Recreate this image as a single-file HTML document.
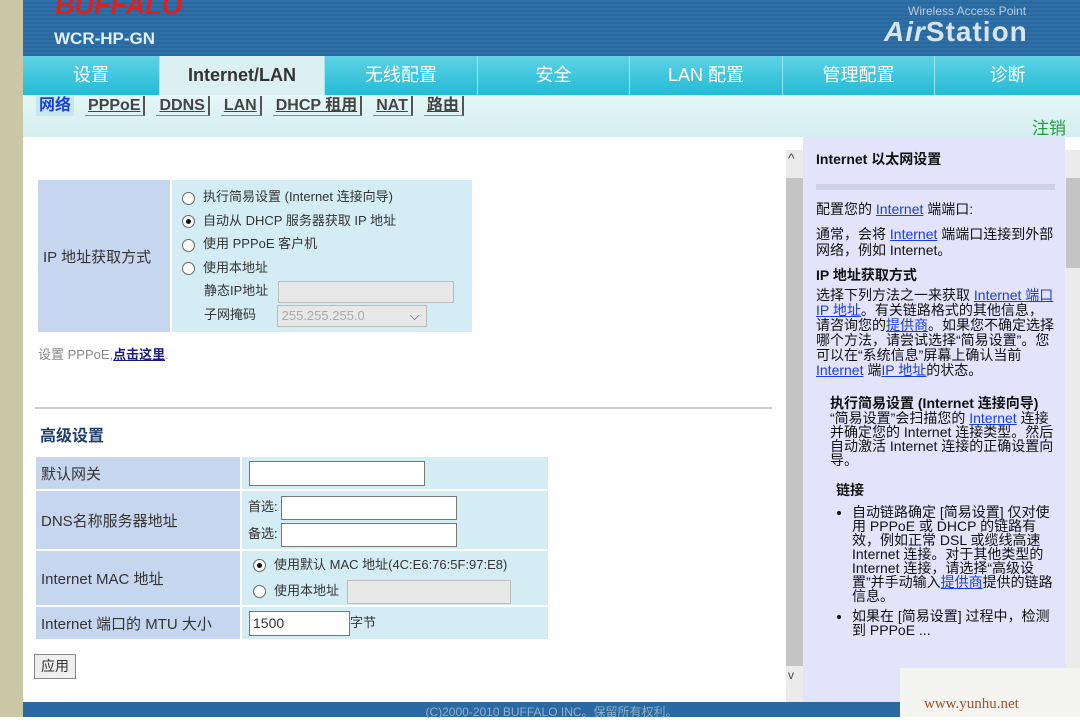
<!DOCTYPE html>
<html><head><meta charset="utf-8"><style>
*{box-sizing:border-box;margin:0;padding:0}
body{width:1080px;height:717px;overflow:hidden;background:#fff;font-family:"Liberation Sans","Noto Sans CJK SC",sans-serif;font-size:14px;color:#333;position:relative}
.abs{position:absolute}
.strip{left:0;top:0;width:23px;height:717px;background:#cbc6a6}
.hdr{left:23px;top:0;width:1057px;height:56px;background:repeating-linear-gradient(#2e6fa6 0 2px,#2a68a0 2px 4px)}
.nav{left:23px;top:56px;width:1057px;height:39px;background:linear-gradient(#5fd2e4,#22bcd6);display:flex}
.nav div{color:#fff;font-size:18px;text-align:center;line-height:39px;border-right:1px solid #9fe4ef}
.nav .act{background:#dcf0f2;color:#333;font-weight:bold}
.sub{left:23px;top:95px;width:1057px;height:42px;background:linear-gradient(#e6f6f7,#d3eef1)}
.tabs{left:36px;top:96px;display:flex;gap:11px;font-weight:bold;font-size:16px}
.tabs span{border-right:2px solid #555;border-bottom:1px solid #888;padding:0 3px;color:#444;text-decoration:underline;line-height:19px}
.tabs span.f{color:#1a3fd8;text-decoration:none;border:none;background:#c8e8f0}
table{border-collapse:separate;border-spacing:2px}
.lbl{background:#c7d6ef;color:#333;font-size:15px;padding-left:5px}
.val{background:#d4edf4;font-size:13px}
.rad{display:inline-block;width:13px;height:13px;border:1px solid #666;border-radius:50%;background:#fff;vertical-align:middle;margin-right:8px;position:relative}
.rad.on::after{content:"";position:absolute;left:3px;top:3px;width:5px;height:5px;border-radius:50%;background:#111}
.inp{display:inline-block;border:1px solid #777;background:#fff;vertical-align:middle}
.dis{background:#e8e8e8;border-color:#bbb}
.help{left:803px;top:137px;width:262px;height:565px;background:#e3e3fb;padding:15px 10px 0 13px;font-size:14px;line-height:15.5px;color:#111;overflow:hidden}
.help a{color:#1a3fd8;text-decoration:underline}
.help p{margin-bottom:10px}
.sb{background:#ebebeb}
.thumb{background:#c4c4c4}
.foot{left:23px;top:702px;width:1057px;height:15px;background:#2a6aa0;color:#8fb1cf;font-size:12px;text-align:center;line-height:20px}
</style></head><body>
<div class="abs strip"></div>
<div class="abs hdr"></div>
<div class="abs" style="left:55px;top:-10px;color:#e02020;font:italic 900 27px 'Liberation Sans',sans-serif;letter-spacing:0px">BUFFALO</div>
<div class="abs" style="left:54px;top:29px;color:#e4eef6;font:bold 17px 'Liberation Sans',sans-serif">WCR-HP-GN</div>
<div class="abs" style="left:908px;top:4px;color:#b9cde0;font-size:12px">Wireless Access Point</div>
<div class="abs" style="left:884px;top:16px;color:#d8e4ee;font:bold 28px 'Liberation Sans',sans-serif;letter-spacing:1px"><i>Air</i>Station</div>
<div class="abs nav">
<div style="width:137px">设置</div><div class="act" style="width:165px">Internet/LAN</div><div style="width:153px">无线配置</div><div style="width:152px">安全</div><div style="width:153px">LAN 配置</div><div style="width:152px">管理配置</div><div style="width:145px;border:none">诊断</div>
</div>
<div class="abs sub"></div>
<div class="abs tabs"><span class="f">网络</span><span>PPPoE</span><span>DDNS</span><span>LAN</span><span>DHCP 租用</span><span>NAT</span><span>路由</span></div>
<div class="abs" style="left:1032px;top:114px;color:#2a9a40;font-size:17px">注销</div>

<table class="abs" style="left:36px;top:178px;width:438px">
<tr><td class="lbl" style="width:132px;height:152px">IP 地址获取方式</td>
<td class="val" style="padding-left:10px;line-height:23.5px">
<div><span class="rad"></span>执行简易设置 (Internet 连接向导)</div>
<div><span class="rad on"></span>自动从 DHCP 服务器获取 IP 地址</div>
<div><span class="rad"></span>使用 PPPoE 客户机</div>
<div><span class="rad"></span>使用本地址</div>
<div style="padding-left:22px">静态IP地址 <span class="inp dis" style="width:176px;height:22px;margin-left:6px"></span></div>
<div style="padding-left:22px">子网掩码 <span class="inp dis" style="width:150px;height:22px;margin-left:17px;color:#aaa;font-size:13px;line-height:20px;padding-left:4px">255.255.255.0 <span style="float:right;color:#555;padding-right:6px">⌵</span></span></div>
</td></tr></table>
<div class="abs" style="left:38px;top:344px;color:#888;font-size:13px">设置 PPPoE,<a style="color:#1a1a80;font-weight:bold;text-decoration:underline">点击这里</a>.</div>
<div class="abs" style="left:35px;top:407px;width:737px;height:2px;background:#ccc"></div>
<div class="abs" style="left:40px;top:422px;color:#1e3f6e;font-size:16px;font-weight:bold">高级设置</div>

<table class="abs" style="left:34px;top:455px;width:516px">
<tr><td class="lbl" style="width:204px;height:32px">默认网关</td><td class="val" style="padding-left:7px"><span class="inp" style="width:176px;height:25px"></span></td></tr>
<tr><td class="lbl" style="height:58px">DNS名称服务器地址</td><td class="val" style="padding-left:6px;line-height:27px"><div>首选: <span class="inp" style="width:176px;height:24px"></span></div><div>备选: <span class="inp" style="width:176px;height:24px"></span></div></td></tr>
<tr><td class="lbl" style="height:54px">Internet MAC 地址</td><td class="val" style="padding-left:11px;line-height:26px"><div><span class="rad on"></span>使用默认 MAC 地址(4C:E6:76:5F:97:E8)</div><div><span class="rad"></span>使用本地址 <span class="inp dis" style="width:164px;height:24px;margin-left:4px"></span></div></td></tr>
<tr><td class="lbl" style="height:32px">Internet 端口的 MTU 大小</td><td class="val" style="padding-left:7px"><span class="inp" style="width:101px;height:25px;font-size:14px;padding-left:3px;line-height:22px">1500</span>字节</td></tr>
</table>
<div class="abs" style="left:34px;top:654px;width:42px;height:25px;border:1px solid #888;background:#eee;font-size:14px;line-height:23px;text-align:center">应用</div>

<div class="abs sb" style="left:786px;top:150px;width:17px;height:552px"></div>
<div class="abs thumb" style="left:786px;top:178px;width:17px;height:488px"></div>
<div class="abs" style="left:788px;top:150px;font-size:14px;color:#444">^</div>
<div class="abs" style="left:788px;top:668px;font-size:12px;color:#444">v</div>
<div class="abs sb" style="left:1065px;top:150px;width:15px;height:552px"></div>
<div class="abs thumb" style="left:1066px;top:178px;width:14px;height:90px"></div>
<div class="abs help">
<div style="font-weight:bold;font-size:14px;margin-bottom:16px">Internet 以太网设置</div>
<div style="height:6px;background:#ccd2ea;margin-bottom:12px"></div>
<p>配置您的 <a>Internet</a> 端端口:</p>
<p>通常，会将 <a>Internet</a> 端端口连接到外部网络，例如 Internet。</p>
<div style="font-weight:bold;margin-bottom:4px">IP 地址获取方式</div>
<p style="line-height:15px">选择下列方法之一来获取 <a>Internet 端口 IP 地址</a>。有关链路格式的其他信息，请咨询您的<a>提供商</a>。如果您不确定选择哪个方法，请尝试选择“简易设置”。您可以在“系统信息”屏幕上确认当前 <a>Internet</a> 端<a>IP 地址</a>的状态。</p>
<div style="padding-left:14px;margin-top:18px"><div style="font-weight:bold">执行简易设置 (Internet 连接向导)</div>
<p style="line-height:14px">“简易设置”会扫描您的 <a>Internet</a> 连接并确定您的 Internet 连接类型。然后自动激活 Internet 连接的正确设置向导。</p>
<div style="font-weight:bold;margin:16px 6px 6px">链接</div>
<ul style="padding-left:22px;line-height:14px"><li style="margin-bottom:6px">自动链路确定 [简易设置] 仅对使用 PPPoE 或 DHCP 的链路有效，例如正常 DSL 或缆线高速 Internet 连接。对于其他类型的 Internet 连接，请选择“高级设置”并手动输入<a>提供商</a>提供的链路信息。</li><li>如果在 [简易设置] 过程中，检测到 PPPoE ...</li></ul></div>
</div>
<div class="abs foot">(C)2000-2010 BUFFALO INC。保留所有权利。</div>
<div class="abs" style="left:900px;top:668px;width:180px;height:49px;background:#f4f4f0;color:#a0522d;font-family:'Liberation Serif',serif;font-size:15px;padding:28px 0 0 24px">www.yunhu.net</div>
</body></html>
